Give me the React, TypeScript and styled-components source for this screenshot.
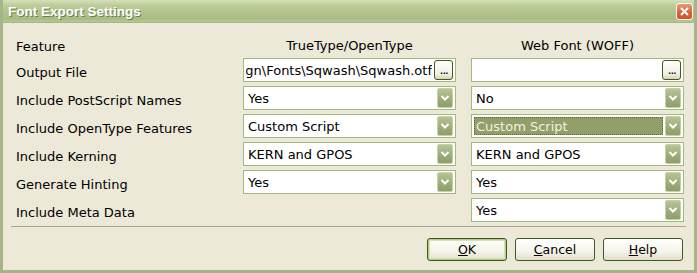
import styled, { createGlobalStyle } from 'styled-components';

const GlobalStyle = createGlobalStyle`
  html, body {
    margin: 0;
    padding: 0;
    background: #ece9d8;
  }
  * {
    box-sizing: border-box;
  }
`

const Window = styled('div')`
  width: 697px;
  height: 273px;
  display: flex;
  flex-direction: column;
  background: #ece9d8;
  border: 3px solid #a4b587;
  border-top: 0;
  font-family: 'DejaVu Sans', Verdana, sans-serif;
  font-size: 13px;
  color: #000;
  overflow: hidden;
`

const TitleBar = styled('div')`
  height: 23px;
  margin: 0 -3px;
  flex: none;
  display: flex;
  align-items: center;
  justify-content: space-between;
  padding: 0 4px 0 8px;
  background: linear-gradient(to bottom, #d6e0bb 0%, #bccb98 25%, #b1c28a 60%, #a9bb83 85%, #b9c795 100%);
  border-bottom: 1px solid #a6b686;

  h1 {
    margin: 0;
    font-family: 'Liberation Sans', Arial, sans-serif;
    font-size: 13.5px;
    font-weight: bold;
    color: #fff;
    text-shadow: 1px 1px 0 #6f7a50;
  }
`

const CloseButton = styled('div')`
  width: 17px;
  height: 17px;
  border: 1px solid #fff;
  border-radius: 3px;
  background: linear-gradient(to bottom, #eb9a7a, #dc5d34 60%, #d0532b);
  display: flex;
  align-items: center;
  justify-content: center;
`

const Body = styled('div')`
  flex: 1;
  padding: 11px 10px 0 13px;
  display: flex;
  flex-direction: column;
`

const Grid = styled('div')`
  display: grid;
  grid-template-columns: 212px 213px 213px;
  grid-template-rows: 20px repeat(6, 24px);
  column-gap: 15px;
  row-gap: 4px;
  align-items: center;
`

const Label = styled('div')`
  padding-top: 4px;
  white-space: nowrap;
`

const ColumnHeader = styled('div')`
  text-align: center;
  padding-top: 2px;
`

const Field = styled('div')`
  height: 24px;
  border: 1px solid #a5b97e;
  background: #fff;
  display: flex;
  align-items: center;
  padding: 2px;
  gap: 2px;
`

const FieldText = styled('div')<{ $selected?: boolean }>`
  flex: 1;
  height: 100%;
  min-width: 0;
  display: flex;
  align-items: center;
  justify-content: flex-start;
  padding-left: 2px;
  white-space: nowrap;
  overflow: hidden;
  background: ${p => (p.$selected ? '#939f69' : 'transparent')};
  color: ${p => (p.$selected ? '#f1f0e4' : '#000')};
  outline: ${p => (p.$selected ? '1px dotted #5d6640' : 'none')};
  outline-offset: -1px;
`

const PathText = styled(FieldText)`
  justify-content: flex-end;
  padding-left: 0;
`

const DropButton = styled('div')`
  width: 16px;
  height: 20px;
  flex: none;
  border: 1px solid #c3cfad;
  border-radius: 2px;
  background: linear-gradient(to bottom, #b6c497, #9bab76 60%, #8f9f6b);
  display: flex;
  align-items: center;
  justify-content: center;
`

const BrowseButton = styled('div')`
  width: 19px;
  height: 20px;
  flex: none;
  border: 1px solid #3d5a23;
  border-radius: 3px;
  background: linear-gradient(to bottom, #ffffff, #f3f1e6 70%, #d8d3bd);
  display: flex;
  align-items: flex-end;
  justify-content: center;
  font-size: 13px;
  line-height: 1;
  padding-bottom: 3px;
  letter-spacing: -1.5px;
`

const Separator = styled('div')`
  height: 1px;
  margin: 4px 0 0 -5px;
  width: 675px;
  background: #a7a697;
`

const ButtonRow = styled('div')`
  display: flex;
  justify-content: flex-end;
  gap: 8px;
  margin-top: 11px;
  padding-right: 1px;
`

const Button = styled('div')<{ $default?: boolean }>`
  width: 80px;
  height: 23px;
  border: 1px solid #3d5a23;
  border-radius: 3px;
  background: linear-gradient(to bottom, #ffffff, #f5f3ea 60%, #e3dfcc);
  box-shadow: ${p => (p.$default ? 'inset 0 0 0 1px #b3cc86, inset 0 0 0 2px #d2e3b2' : 'none')};
  display: flex;
  align-items: center;
  justify-content: center;
  font-family: 'DejaVu Sans', Tahoma, sans-serif;
  font-size: 12.5px;

  u {
    text-decoration: underline;
  }
`

const Chevron = () => (
  <svg width="10" height="8" viewBox="0 0 10 8">
    <path d="M1.5 2 L5 5.5 L8.5 2" fill="none" stroke="#fff" strokeWidth="2" />
  </svg>
)

const Select = ({ value, selected }: { value: string; selected?: boolean }) => (
  <Field>
    <FieldText $selected={selected}>{value}</FieldText>
    <DropButton><Chevron /></DropButton>
  </Field>
)

function App() {
  return (
    <>
      <GlobalStyle />
      <Window>
        <TitleBar>
          <h1>Font Export Settings</h1>
          <CloseButton>
            <svg width="9" height="9" viewBox="0 0 9 9">
              <path d="M1 1 L8 8 M8 1 L1 8" stroke="#fff" strokeWidth="2" />
            </svg>
          </CloseButton>
        </TitleBar>

        <Body>
          <Grid>
            <Label>Feature</Label>
            <ColumnHeader>TrueType/OpenType</ColumnHeader>
            <ColumnHeader>Web Font (WOFF)</ColumnHeader>

            <Label>Output File</Label>
            <Field>
              <PathText>C:\Design\Fonts\Sqwash\Sqwash.otf</PathText>
              <BrowseButton>...</BrowseButton>
            </Field>
            <Field>
              <PathText />
              <BrowseButton>...</BrowseButton>
            </Field>

            <Label>Include PostScript Names</Label>
            <Select value="Yes" />
            <Select value="No" />

            <Label>Include OpenType Features</Label>
            <Select value="Custom Script" />
            <Select value="Custom Script" selected />

            <Label>Include Kerning</Label>
            <Select value="KERN and GPOS" />
            <Select value="KERN and GPOS" />

            <Label>Generate Hinting</Label>
            <Select value="Yes" />
            <Select value="Yes" />

            <Label>Include Meta Data</Label>
            <div />
            <Select value="Yes" />
          </Grid>

          <Separator />

          <ButtonRow>
            <Button $default><span><u>O</u>K</span></Button>
            <Button><span><u>C</u>ancel</span></Button>
            <Button><span><u>H</u>elp</span></Button>
          </ButtonRow>
        </Body>
      </Window>
    </>
  );
}

export default App;
